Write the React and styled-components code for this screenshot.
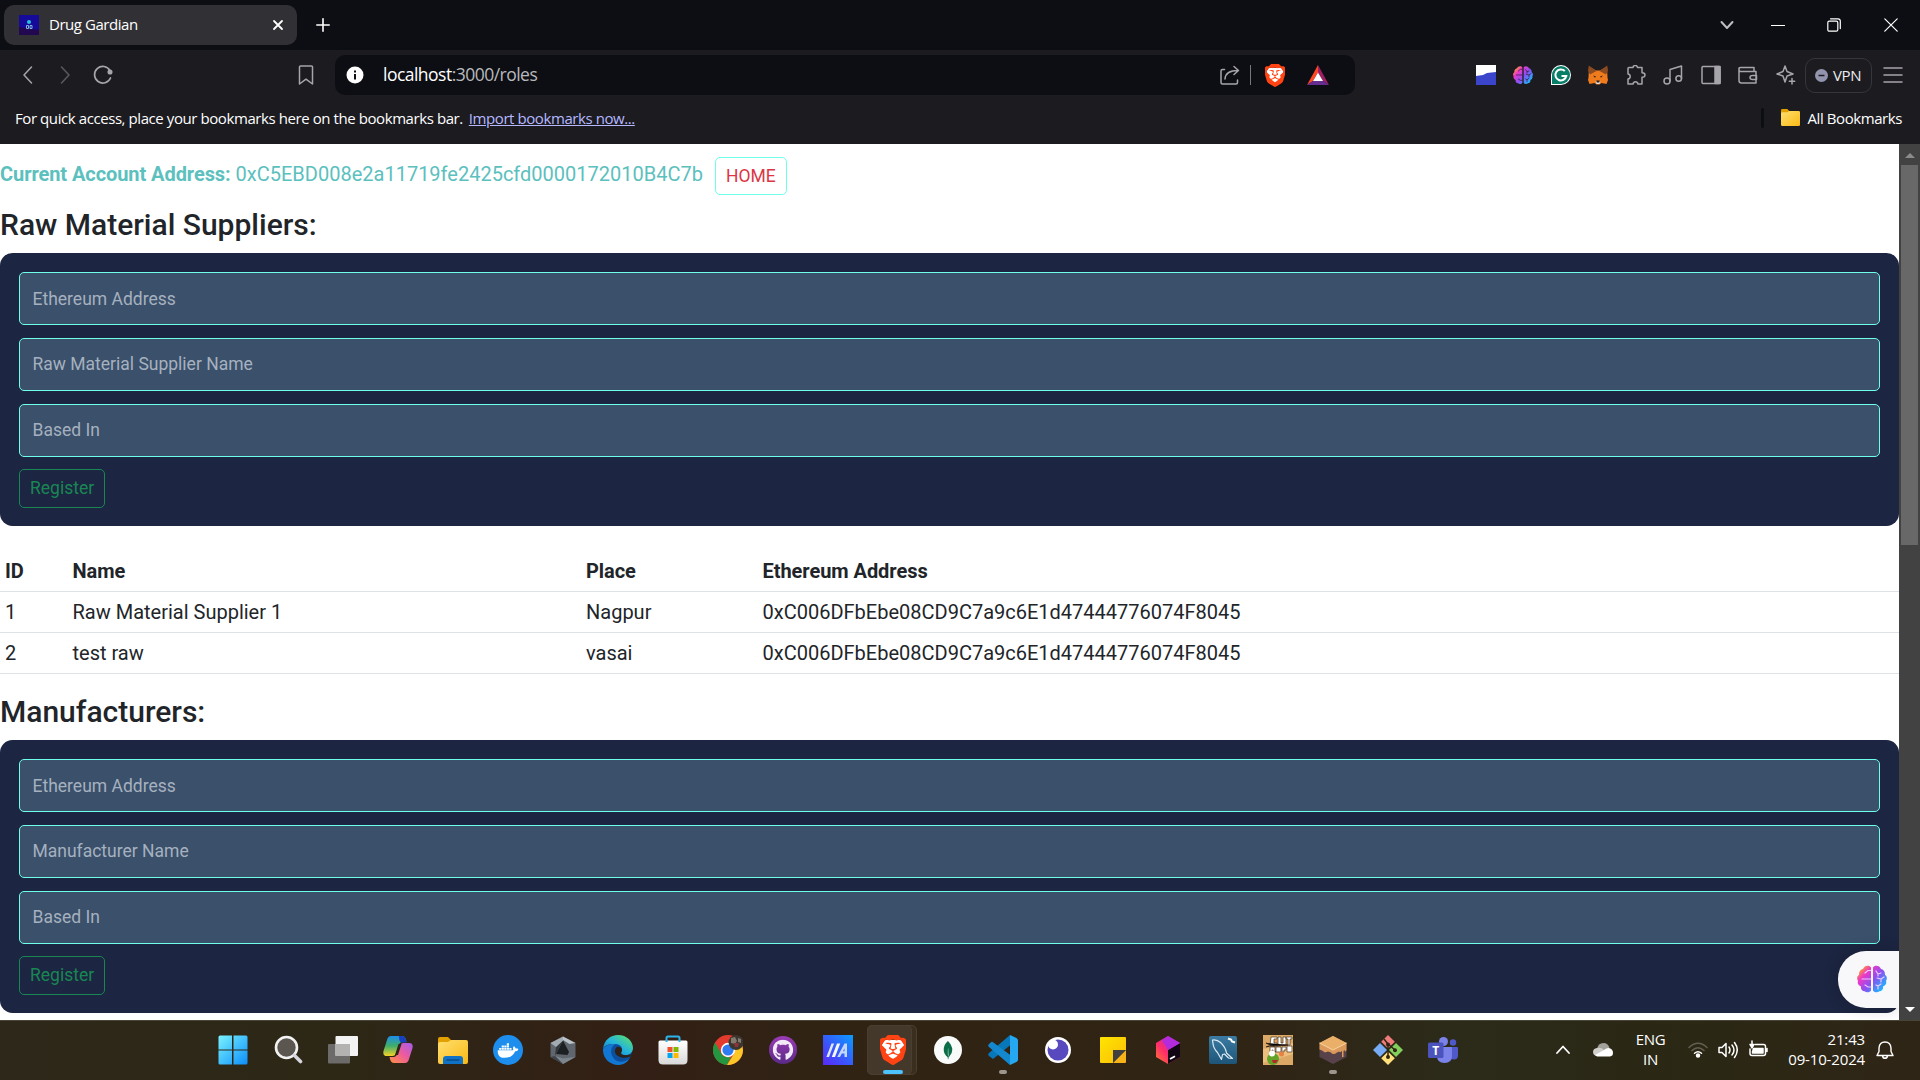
import React from "react";
import styled, { createGlobalStyle, css } from "styled-components";
import { FaDocker, FaGithub } from "react-icons/fa";
import { SiBrave, SiMongodb } from "react-icons/si";

const Global = createGlobalStyle`
  *, *::before, *::after { box-sizing: border-box; }
  html, body { margin: 0; padding: 0; }
  body { width: 1920px; height: 1080px; overflow: hidden; }
  svg { display: block; flex: none; }
`;

const ui = css`font-family: "Open Sans", "Noto Sans", sans-serif;`;

const Screen = styled.div`
  width: 1920px;
  height: 1080px;
  display: flex;
  flex-direction: column;
  overflow: hidden;
  background: #1c1b20;
`;

/* ---------- Tab strip ---------- */
const TabStrip = styled.header`
  ${ui}
  height: 50px;
  flex: none;
  display: flex;
  align-items: center;
  padding-left: 4px;
  background: #0d0e13;
  color: #fff;
`;
const Tab = styled.div`
  width: 293px;
  height: 40px;
  border-radius: 10px;
  background: #313035;
  display: flex;
  align-items: center;
  padding: 0 11.5px 0 15px;
`;
const TabTitle = styled.span`
  flex: 1;
  margin-left: 10px;
  padding-bottom: 2px;
  font-size: 15px;
  letter-spacing: -0.45px;
`;
const NewTab = styled.div`margin-left: 19px;`;
const WindowButtons = styled.div`
  margin-left: auto;
  display: flex;
  align-items: center;
  padding: 0 1px 1px 0;
`;
const WinCell = styled.div`
  width: ${(p) => p.$w}px;
  display: flex;
  justify-content: center;
`;

/* ---------- Toolbar ---------- */
const Toolbar = styled.div`
  ${ui}
  height: 50px;
  flex: none;
  display: flex;
  align-items: center;
  color: #a6a5aa;
`;
const NavButtons = styled.div`
  width: 335px;
  display: flex;
  align-items: center;
  padding-left: 9px;
`;
const NavCell = styled.div`
  width: 37.5px;
  display: flex;
  justify-content: center;
  opacity: ${(p) => (p.$dim ? 0.45 : 1)};
  margin-left: ${(p) => p.$push || 0}px;
`;
const AddressBar = styled.div`
  width: 1020px;
  height: 40px;
  border-radius: 10px;
  background: #0d0e13;
  display: flex;
  align-items: center;
  padding: 0 26px 0 11px;
`;
const Url = styled.div`
  flex: 1;
  margin-left: 19px;
  padding-bottom: 2px;
  font-size: 17.5px;
  letter-spacing: -0.52px;
  color: #b9b9bd;
  b { font-weight: 400; color: #fff; }
`;
const AddressActions = styled.div`
  display: flex;
  align-items: center;
  i { width: 1px; height: 20px; margin: 0 14px 0 10px; background: #77777c; }
`;
const RewardsIcon = styled.div`margin-left: 22px;`;
const Extensions = styled.div`
  display: flex;
  align-items: center;
  margin-left: 112px;
`;
const ExtCell = styled.div`
  width: 37.5px;
  display: flex;
  justify-content: center;
`;
const Vpn = styled.div`
  width: 67px;
  height: 35px;
  border: 1px solid #36353b;
  border-radius: 10px;
  display: flex;
  align-items: center;
  justify-content: center;
  gap: 5px;
  font-size: 15px;
  letter-spacing: -0.4px;
  color: #ececf2;
`;
const VpnLabel = styled.span`padding-bottom: 1px;`;
const MenuCell = styled.div`margin-left: 11px;`;

const BookmarksBar = styled.div`
  ${ui}
  height: 44px;
  flex: none;
  display: flex;
  align-items: center;
  padding: 0 18px 8px 15px;
  font-size: 15px;
  letter-spacing: -0.42px;
  color: #fff;
  white-space: pre;
`;
const ImportLink = styled.a`
  margin-left: 6px;
  color: #b5b8ff;
  text-decoration: underline;
`;
const AllBookmarks = styled.div`
  margin-left: auto;
  display: flex;
  align-items: center;
  i { width: 3px; height: 20px; border-radius: 2px; background: #0d0e13; margin-right: 17px; }
  span { margin-left: 8px; }
`;

/* ---------- Page ---------- */
const Viewport = styled.div`
  height: 876px;
  flex: none;
  display: flex;
  overflow: hidden;
`;
const Page = styled.main`
  width: 1899px;
  background: #fff;
  color: #212529;
  font-family: Roboto, sans-serif;
  font-size: 20px;
  line-height: 30px;
  overflow: hidden;
`;
const AccountRow = styled.div`
  height: 65px;
  display: flex;
  align-items: flex-start;
  padding-top: 13px;
  color: #5bc0be;
  white-space: pre;
`;
const AccountText = styled.div`
  padding-top: 2px;
  b { font-weight: 700; letter-spacing: -0.07px; }
`;
const HomeButton = styled.button`
  height: 38px;
  margin-left: 12px;
  padding: 0 10px;
  border: 1px solid #6fffe9;
  border-radius: 5px;
  background: transparent;
  color: #dc3545;
  font: 400 17.5px/26px Roboto, sans-serif;
`;
const Heading = styled.h4`
  margin: 0;
  height: ${(p) => p.$h}px;
  padding-top: ${(p) => p.$top}px;
  font-size: 30px;
  line-height: ${(p) => p.$lh}px;
  font-weight: 500;
`;
const Card = styled.form`
  height: 273px;
  padding: 19px;
  border-radius: 12.5px;
  background: #1c2541;
  display: flex;
  flex-direction: column;
  align-items: flex-start;
`;
const Field = styled.input`
  width: 100%;
  height: 53px;
  flex: none;
  margin-bottom: 13px;
  padding: 0 12.5px;
  border: 1px solid #6fffe9;
  border-radius: 5px;
  background: #3a506b;
  font: 400 17.5px Roboto, sans-serif;
  & + & { padding-bottom: 2px; }
  &::placeholder { color: #a6b1bf; opacity: 1; }
`;
const RegisterButton = styled.button`
  height: 39px;
  flex: none;
  margin-top: -1px;
  padding: 0 10px 2px;
  border: 1px solid #198754;
  border-radius: 5px;
  background: transparent;
  color: #198754;
  font: 400 17.5px/26px Roboto, sans-serif;
`;
const Table = styled.div`
  margin-top: 25px;
  display: grid;
  grid-template-columns: 67.5px 513.5px 176.5px 1fr;
`;
const Cell = styled.div`
  height: 41px;
  padding: 5px;
  border-bottom: 1px solid #dee2e6;
  font-weight: ${(p) => (p.$head ? 700 : 400)};
  letter-spacing: ${(p) => (p.$head ? "-0.05px" : "0")};
`;
const Scrollbar = styled.div`
  width: 21px;
  background: #424242;
  display: flex;
  flex-direction: column;
  align-items: center;
  padding: 9px 0 8px;
`;
const Thumb = styled.div`
  width: 17px;
  height: 380px;
  margin: 7px 0 auto;
  background: #686868;
`;
const BrainBubble = styled.div`
  position: absolute;
  left: 1838px;
  top: 951px;
  width: 61px;
  height: 57px;
  padding: 0 0 1px 6px;
  border-radius: 28px 0 0 28px;
  background: #f8f8fa;
  box-shadow: 0 0 16px rgba(0, 0, 0, 0.18);
  clip-path: inset(-20px 0 -12px -20px);
  display: flex;
  align-items: center;
  justify-content: center;
`;

/* ---------- Taskbar ---------- */
const Taskbar = styled.footer`
  ${ui}
  height: 60px;
  flex: none;
  display: flex;
  align-items: center;
  padding: 0 0 1px 205px;
  border-top: 1px solid #4a4637;
  background: linear-gradient(90deg, #2d2819 0, #2d2716 350px, #331f15 640px, #302314 800px, #302415 1250px, #2c2a19 1440px, #2a2815 1640px, #2f2516 1920px);
  color: #fff;
`;
const AppCell = styled.div`
  width: 55.04px;
  height: 50px;
  flex: none;
  display: flex;
  align-items: center;
  justify-content: center;
  position: relative;
`;
const ActiveTile = styled.div`
  position: absolute;
  left: 2px;
  top: 0;
  width: ${(p) => p.$w}px;
  height: 50px;
  border: 1px solid #4a3e30;
  border-radius: 5px;
  background: rgba(255, 255, 255, 0.05);
`;
const Indicator = styled.div`
  position: absolute;
  bottom: 1px;
  width: ${(p) => (p.$active ? 20 : 8)}px;
  height: 4px;
  border-radius: 2px;
  background: ${(p) => (p.$active ? "#4cc2ff" : "#9d968c")};
`;
const IconLayer = styled.div`position: relative;`;
const Tray = styled.div`
  margin-left: auto;
  display: flex;
  align-items: center;
  padding: 0 26px 1px 0;
  font-size: 15px;
  line-height: 20px;
`;
const Lang = styled.div`
  width: 40px;
  margin: 0 14.5px 0 18px;
  padding-bottom: 1px;
  text-align: center;
  letter-spacing: -0.3px;
`;
const Clock = styled.div`
  width: 84px;
  margin: 0 11px 0 13px;
  padding-bottom: 1px;
  text-align: right;
  white-space: nowrap;
  letter-spacing: -0.15px;
`;
const TrayIcon = styled.div`margin-left: ${(p) => p.$gap}px;`;

/* ---------- Icons ---------- */
const Line = ({ size = 20, w = 1.5, children, vb = 20 }) => (
  <svg width={size} height={size} viewBox={`0 0 ${vb} ${vb}`} fill="none" stroke="currentColor" strokeWidth={w} strokeLinecap="round" strokeLinejoin="round">{children}</svg>
);
const HiddenSvg = styled.svg`position: absolute;`;
const Defs = () => (
  <HiddenSvg width="0" height="0">
    <defs>
      <linearGradient id="brain" x1="0" y1="0" x2="30" y2="28" gradientUnits="userSpaceOnUse"><stop offset=".12" stopColor="#ff9a2e" /><stop offset=".3" stopColor="#ec38c8" /><stop offset=".55" stopColor="#8b50f0" /><stop offset=".85" stopColor="#1eb4ff" /></linearGradient>
      <linearGradient id="win" x1="0" y1="0" x2="30" y2="30" gradientUnits="userSpaceOnUse"><stop offset="0" stopColor="#7cf4ff" /><stop offset="1" stopColor="#0a8dfa" /></linearGradient>
      <linearGradient id="folder" x1="0" y1="0" x2="1" y2="1"><stop offset="0" stopColor="#ffdf70" /><stop offset="1" stopColor="#f9b914" /></linearGradient>
      <linearGradient id="edge" x1="0" y1="1" x2="1" y2="0"><stop offset="0" stopColor="#0b78d0" /><stop offset=".5" stopColor="#25b5dc" /><stop offset="1" stopColor="#62e65c" /></linearGradient>
      <linearGradient id="copA" x1="0" y1="0" x2="0" y2="1"><stop offset="0" stopColor="#1d8fe8" /><stop offset=".5" stopColor="#3fae6a" /><stop offset="1" stopColor="#f6d326" /></linearGradient>
      <linearGradient id="copB" x1="1" y1="0" x2="0" y2="1"><stop offset="0" stopColor="#a55bf0" /><stop offset=".5" stopColor="#ee5c9a" /><stop offset="1" stopColor="#ff9340" /></linearGradient>
      <linearGradient id="msi" x1="1" y1="0" x2="0" y2="1"><stop offset="0" stopColor="#0a9cff" /><stop offset=".6" stopColor="#3d52fb" /><stop offset="1" stopColor="#5a28f8" /></linearGradient>
      <linearGradient id="jb" x1="0" y1="1" x2="1" y2="0"><stop offset="0" stopColor="#ff7a30" /><stop offset=".4" stopColor="#fd2d6a" /><stop offset="1" stopColor="#a428f0" /></linearGradient>
      <linearGradient id="sql" x1="0" y1="0" x2="0" y2="1"><stop offset="0" stopColor="#3c7ba3" /><stop offset="1" stopColor="#1d5578" /></linearGradient>
      <linearGradient id="gh" x1="0" y1="0" x2="0" y2="1"><stop offset="0" stopColor="#9a3bb5" /><stop offset="1" stopColor="#5a2a88" /></linearGradient>
      <linearGradient id="bag" x1="0" y1="0" x2="0" y2="1"><stop offset="0" stopColor="#ffffff" /><stop offset="1" stopColor="#d8d8d8" /></linearGradient>
      <linearGradient id="note" x1="0" y1="0" x2="1" y2="1"><stop offset="0" stopColor="#ffe500" /><stop offset="1" stopColor="#fbbd08" /></linearGradient>
    </defs>
  </HiddenSvg>
);
const BraveIcon = ({ w, h }) => (
  <svg width={w} height={h} viewBox="2.7 0 18.600 24" preserveAspectRatio="none">
    <path fill="#fff" d="M6 4h12l2 4-3 10-5 4-5-4L4 8z" />
    <SiBrave x="0" y="0" width="24" height="24" size={24} color="#ff4313" />
  </svg>
);
const Brain = ({ size }) => (
  <svg width={size} height={size} viewBox="0 0 30 28">
    <path fill="url(#brain)" d="M14 2.500v23c-1 2-4.500 2.500-6.500.8C5 26 3.500 24 4 21.500 1.500 20.500 0 18.500 1 16c-1.500-2-1-5 1-6C1.800 6.500 3.500 4.500 6 4 7 .5 12.500-.5 14 2.500zM16 2.500v23c1 2 4.500 2.500 6.500.8 2.500-.3 4-2.300 3.500-4.800 2.500-1 4-3 3-5.500 1.500-2 1-5-1-6 .2-3.500-1.500-5.500-4-6C23 .5 17.500-.5 16 2.500z" />
    <path fill="none" stroke={size > 25 ? "#e9c8ff" : "#3c2050"} strokeWidth="1.200" strokeLinecap="round" d="M14 5.500h-3l-3 2.500M14 14H5M14 22h-3l-3-2M19 6l2 3 3-1M21 9v2M20 13l4 1 3-2M24 14v3M19 20l2 1 3-2M21 21v3" />
  </svg>
);
const Folder = ({ size, blue }) => (
  <svg width={size} height={size * 0.9} viewBox="0 0 30 27">
    <path fill="#e2a100" d="M0 2q0-2 2-2h8l3 3h15v8H0z" />
    <path fill="url(#folder)" d="M0 7q0-2 2-2h8l3-2h15q2 0 2 2v20q0 2-2 2H2q-2 0-2-2z" />
    {blue && <path fill="#0f72c4" d="M5 27v-5q0-3 3-3h14q3 0 3 3v5z" />}
    {blue && <path stroke="#0a4c8c" strokeWidth="1.500" d="M8.500 23h13" />}
  </svg>
);
const S = ({ children, w = 30, h = 30, vb = "0 0 30 30" }) => <svg width={w} height={h} viewBox={vb}>{children}</svg>;

const apps = [
  { n: "start", i: <S><path fill="url(#win)" d="M.5 2q0-1.500 1.500-1.500h12v14H.5zM15.500.5h12.500q1.500 0 1.500 1.500v12.500h-14zM.5 15.500h13.500v14H2q-1.500 0-1.500-1.500zM15.500 15.500h14V28q0 1.500-1.500 1.500H15.500z" /></S> },
  { n: "search", i: <S><circle cx="13.500" cy="12.500" r="10.500" fill="#5b5750" stroke="#f2f2f2" strokeWidth="2.600" /><path d="M21.500 20.500l6 6" stroke="#d6d6dc" strokeWidth="3.600" strokeLinecap="round" /></S> },
  { n: "tasks", i: <S><rect y="9" width="22" height="19.500" rx="1" fill="#6d6b69" /><rect x="7.500" y="1" width="22.500" height="20" rx="1" fill="#f3f3f3" /><path fill="#b3b2b0" d="M7.500 9H22v12H7.500z" /></S> },
  { n: "copilot", i: <S><path fill="url(#copA)" d="M8 1h11q3 0 4 4l.5 2h-4q-3 0-4 4l-2.200 7q-1 3-4 3H4q-4.500 0-3.500-5L4 5Q5 1 8 1z" /><path fill="#183fc0" d="M16 1h3q3 0 4 4l.7 2.500h-5q-2.700-.5-2.700-6.500z" /><path fill="url(#copB)" d="M22 28H11q-3 0-4-4l-.5-2h4q3 0 4-4l2.200-7q1-3 4-3H26q4.500 0 3.500 5L26 24q-1 4-4 4z" /><path fill="#2d2716" d="M15.500 9h3l-3.500 11h-3z" /></S> },
  { n: "files", i: <Folder size={30} blue /> },
  { n: "docker", i: <S><circle cx="15" cy="15" r="15" fill="#1d8eed" /><g transform="translate(4.500 5)"><FaDocker size={21} color="#fff" /></g></S> },
  { n: "crystal", i: <S><path fill="#5f666e" d="M15 1.500l12.500 6.500v14L15 29 2.500 22V8z" /><path fill="#bac2ca" d="M15 1.500l12.500 6.500-6 1L15 5z" /><path fill="#7c848c" d="M7 21l8 2.500L27.500 22 15 29z" /><path fill="#3d4349" d="M2.500 22L7 21l8 8z" /><path fill="#1d2023" d="M15 5.500L21 17l-1.500 3L8 19z" /><path fill="#33383d" d="M15 5.500L7 21l1-9z" /><path fill="#a2aab2" d="M2.500 8L15 1.500v4L8 12z" /></S> },
  { n: "edge", i: <S><circle cx="17" cy="17" r="11.500" fill="#0c4f9e" /><path fill="url(#edge)" d="M0 14C1 5 7.500 0 15 0c9 0 15 6.500 15 13 0 4.500-3.500 7-7.500 7-3.500 0-5-1.500-4-3 2-4-1-8-6-8C6 9 1.500 10 0 14z" /><path fill="#1277d2" d="M0 14c2-4 7-5.500 12.500-5C8.500 11 7 16 9 20.500c2 4.500 6 7 11 6 3-.6 4.500-1.500 6.500-3C24 28 19.500 30 15 30 6.500 30-.5 23 0 14z" /><path fill="#2e2116" d="M14 11.800q4.500-.3 5 3-.1 2-1 3-.3 2.500 5 2.500 3 0 5-1.200l-.8 2.400q-5 2-9 1Q12 20.500 11.800 16q0-2.500 2.200-4.200z" /></S> },
  { n: "store", i: <S><path fill="url(#bag)" d="M.5 7q0-1.500 1.500-1.500h26q1.500 0 1.500 1.500v18q0 4.500-4.500 4.500H5Q.5 29.500.5 25z" /><path fill="none" stroke="#2bb5ec" strokeWidth="2" d="M8.500 7V3q0-1.500 1.500-1.500h10q1.500 0 1.500 1.500v4" /><path fill="#f1502f" d="M9.500 12H14.500v5h-5z" /><path fill="#7fba00" d="M15.500 12h5v5h-5z" /><path fill="#00a4ef" d="M9.500 18h5v5h-5z" /><path fill="#ffb900" d="M15.500 18h5v5h-5z" /></S> },
  { n: "chrome", i: <S><circle cx="15" cy="15" r="15" fill="#e33b2e" /><path fill="#24963f" d="M2 7.500L8.500 19q3 4 9.500 3l-4 8C6 29.500 0 23 0 15q0-4 2-7.500z" /><path fill="#fcc626" d="M15 8h13q2 3 2 7c0 8-7 15.500-16 15l7.500-12z" /><circle cx="15" cy="15" r="7.200" fill="#fff" /><circle cx="15" cy="15" r="5.600" fill="#2f7cf0" /><circle cx="23" cy="7.500" r="7.500" fill="#3b3630" /><path fill="#83796c" d="M18 3l4-1 2 4-2 3-4-1zM25 3l3 1v4l-3-1z" /><path fill="#8d3436" d="M21 8h5l-1 4h-3z" /></S> },
  { n: "github", i: <S><circle cx="15" cy="15" r="14" fill="url(#gh)" /><g transform="translate(4.500 4.500)"><FaGithub size={21} color="#f2eaf7" /></g></S> },
  { n: "myasus", i: <S><path fill="url(#msi)" d="M0 0h30v30H0z" /><path fill="#dce9ff" d="M8.500 8.500h2.600L6 22H3.400z" /><path fill="#f4f8ff" d="M14 8.500h3.200L12 22H8.800z" /><path fill="#c4d8ff" d="M21.500 8.500H24V22h-2.500v-3.500h-4l1-2.300h3v-3L17 22h-2.800z" /></S> },
  { n: "brave", active: true, i: <BraveIcon w={26} h={30} /> },
  { n: "compass", i: <S><circle cx="15" cy="15" r="14" fill="#f9fbfa" /><g transform="translate(5.500 5.500)"><SiMongodb size={19} color="#0a6e49" /></g></S> },
  { n: "code", running: true, i: <S><path fill="#0877b9" d="M22 0l3 8L5 24l-4-3q-1.500-1.500 0-3z" /><path fill="#1488cf" d="M1 12q-1.500-1.500 0-3l3-2.500L25 22l-3 8z" /><path fill="#26a7f2" d="M22 0l6.500 3Q30 4 30 5.500v19q0 1.500-1.500 2.500L22 30z" /></S> },
  { n: "insomnia", i: <S><circle cx="15" cy="15" r="13" fill="#fff" /><circle cx="15" cy="15" r="10.500" fill="#5849be" /><circle cx="10" cy="9.500" r="5" fill="#fff" /></S> },
  { n: "notes", i: <S><path fill="url(#note)" d="M2 3q0-1 1-1h24q1 0 1 1v12L15 28H3q-1 0-1-1z" /><path fill="#f7b318" d="M28 15v12q0 1-1 1H15z" /><path fill="#423f3f" d="M15 15h13L15 28z" /></S> },
  { n: "toolbox", i: <S><path fill="url(#jb)" d="M15 1l12 7v14l-12 7-12-7V8z" /><path fill="#120614" d="M15 15l12-7v14l-12 7z" /><path fill="#b22bdd" d="M15 1l12 7-12 7L9 5z" /><path stroke="#fff" strokeWidth="1.800" d="M17 24l5-2.800" /></S> },
  { n: "mysql", i: <S><rect x="1" y="1" width="28" height="28" rx="2" fill="url(#sql)" /><path fill="none" stroke="#dcebf3" strokeWidth="1.200" strokeLinejoin="round" d="M4.500 5q4-1 8 2.500 5 4.500 6 10.500l6 5.500-4-.5-4-4-2 .5-1 5-4-7q-4-4-4.500-9z" /><path d="M20 3.500l3 1 1 2 3 1" fill="none" stroke="#fff" strokeWidth="2" /></S> },
  { n: "rope", i: <S><path fill="#dca866" d="M0 0h30v30H0z" /><path fill="#edbf7d" d="M0 14l30-6v11L0 28z" /><path fill="#fff" stroke="#493321" strokeWidth=".7" d="M8 2h6v2h-3v4h3v2H7zM15 2h3v6h2V2h3v8h-8zM23 2h6v2h-2v6h-2V4h-2zM7 12h5v4l1 1h-3v-2h-1v2H7zM13 12h5v5h-5zM19 12h4v3h-2v2h-2zM24 11h5v6h-5z" /><path stroke="#31231b" strokeWidth="1.300" d="M3 8l7 3 15-1M3 12l7-2" /><circle cx="10" cy="24" r="6" fill="#62a328" /><circle cx="9" cy="18.500" r="3" fill="#fff" /><path fill="#b7272b" d="M9 25h6l-2 3h-3z" /><circle cx="18.500" cy="19" r="2.500" fill="#e78244" /></S> },
  { n: "dungeon", running: true, i: <S><path fill="#57424a" d="M1.500 8L15 15l13.500-7v14L15 29 1.500 22z" /><path fill="#db9a5b" d="M15 1l13.500 7v7q-1 3-2 0l-1 1v6h-1.500v-6q-2 2-3 .5l-2 1q-4 3-6 0l-3-1-3 1-3-2-2.500-1V8z" /><path fill="#eab06a" d="M15 1l13.500 7L15 15 1.500 8z" /><path fill="none" stroke="#f8d29d" d="M1.500 8L15 15l13.500-7" /></S> },
  { n: "git", i: <S><path fill="#ef7b7b" d="M15 0l6.800 6.800L15 13.600 8.200 6.800z" /><path fill="#82cf5b" d="M23 8l7 7-7 7-7-7z" /><path fill="#78abf6" d="M7 8l7 7-7 7-7-7z" /><path fill="#ffe07a" d="M15 16.400l6.800 6.800L15 30l-6.800-6.800z" /><path fill="none" stroke="#302415" strokeWidth="1.500" d="M11 4l4 5v12M15 9l7 6" /><g fill="#302415"><circle cx="15" cy="9.500" r="2" /><circle cx="15" cy="22" r="2" /><circle cx="22" cy="15.200" r="2" /></g></S> },
  { n: "teams", i: <S><circle cx="25" cy="7.500" r="3.200" fill="#5059c9" /><path fill="#5059c9" d="M19 12h10q1 0 1 1v7q0 4.500-4 4.500t-7-3z" /><circle cx="15.500" cy="6.500" r="4.500" fill="#7b83eb" /><path fill="#7b83eb" d="M9 12h15v9q0 7-7.500 7T9 21z" /><rect y="7.500" width="15.500" height="15.500" rx="1.500" fill="#4b53bc" /><text x="7.700" y="19.600" textAnchor="middle" fontFamily="Open Sans, sans-serif" fontSize="12" fontWeight="700" fill="#fff">T</text></S> },
];

const GrammarlyIcon = () => (
  <S w={20} h={20} vb="0 0 20 20"><path fill="#fff" d="M10 0a10 10 0 1 1 0 20H0V10A10 10 0 0 1 10 0z" /><path fill="#087d68" d="M10 1a9 9 0 1 1 0 18H1v-9a9 9 0 0 1 9-9z" /><path fill="none" stroke="#fff" strokeWidth="2" d="M13.800 6A5.500 5.500 0 1 0 15.300 11H10.500" /></S>
);
const FoxIcon = () => (
  <S w={20} h={20} vb="0 0 20 20"><path fill="#ef7b1d" d="M1 1.500l7 4h4l7-4 .5 11L20 15l-1.500 4-5-1-2 1.500h-3l-2-1.500-5 1L0 15l.5-2.500z" /><path fill="#8c4a20" d="M.8.5L8.500 6 2 9.500 0 5.500zM19.200.5L11.500 6 18 9.500l2-4z" /><path fill="#dedede" d="M7.500 16.500h5L11.500 19h-3z" /><path fill="#2b2320" d="M8.300 15.500h3.400l-.5 2H8.800zM5 10.500l3 1-1 1.200zM15 10.500l-3 1 1 1.200z" /></S>
);

/* ---------- Content ---------- */
const Section = ({ fieldName }) => (
  <Card>
    <Field placeholder="Ethereum Address" />
    <Field placeholder={fieldName} />
    <Field placeholder="Based In" />
    <RegisterButton type="button">Register</RegisterButton>
  </Card>
);
const rows = [
  ["1", "Raw Material Supplier 1", "Nagpur", "0xC006DFbEbe08CD9C7a9c6E1d47444776074F8045"],
  ["2", "test raw", "vasai", "0xC006DFbEbe08CD9C7a9c6E1d47444776074F8045"],
];

export default function App() {
  return (
    <Screen>
      <Global />
      <Defs />
      <TabStrip>
        <Tab>
          <S w={20} h={20} vb="0 0 20 20"><path fill="#160a9a" d="M0 0h20v20H0z" /><path fill="#26083f" d="M0 12l20 3v5H0z" opacity=".8" /><circle cx="10" cy="7" r="2" fill="#25c3d8" /><path fill="none" stroke="#7fb6d9" d="M7.500 10.500h2v3h-2zM11 10.500h2v3h-2z" /></S>
          <TabTitle>Drug Gardian</TabTitle>
          <Line size={16} w={1.8} vb={16}><path d="M4 4l8 8M12 4l-8 8" /></Line>
        </Tab>
        <NewTab><Line size={14} w={1.6} vb={14}><path d="M7 .8v12.400M.8 7h12.400" /></Line></NewTab>
        <WindowButtons>
          <WinCell $w={45}><Line size={14} w={2} vb={14}><path d="M1.500 4L7 10l5.500-6" stroke="#bdbdc2" /></Line></WinCell>
          <WinCell $w={57}><Line size={14} w={1.2} vb={14}><path d="M.5 7.500h13" /></Line></WinCell>
          <WinCell $w={56}><Line size={14} w={1.2} vb={14}><rect x=".8" y="3.200" width="10" height="10" rx="1.500" /><path d="M3.500.8h7.500q2.300 0 2.300 2.300v7.500" /></Line></WinCell>
          <WinCell $w={57}><Line size={14} w={1.2} vb={14}><path d="M.8.8l12.400 12.400M13.200.8L.8 13.200" /></Line></WinCell>
        </WindowButtons>
      </TabStrip>

      <Toolbar>
        <NavButtons>
          <NavCell><Line><path d="M13.500 2L6 10l7.500 8" /></Line></NavCell>
          <NavCell $dim><Line><path d="M6.500 2l7.500 8-7.500 8" /></Line></NavCell>
          <NavCell><Line w={1.7}><path d="M17.500 13A8.300 8.300 0 1 1 17 5.500" /><circle cx="17" cy="7" r="1.700" fill="currentColor" /></Line></NavCell>
          <NavCell $push={166}><Line w={1.5}><path d="M3.500 1.800Q3.500 1 4.500 1h11q1 0 1 .8V19L10 14.200 3.500 19z" /></Line></NavCell>
        </NavButtons>
        <AddressBar>
          <S w={18} h={18} vb="0 0 18 18"><circle cx="9" cy="9" r="8.500" fill="#fff" /><path stroke="#0d0e13" strokeWidth="2" d="M9 8v5.500M9 4.500v2" /></S>
          <Url><b>localhost</b>:3000/roles</Url>
          <AddressActions>
            <Line w={1.500}><path d="M4.500 4.500H2.500q-1.500 0-1.500 1.500v11.500q0 1.500 1.500 1.500H16q1.500 0 1.500-1.500V15M5 14q.5-8.500 13-8.500M14 1.500l4.500 4-4.500 4" /></Line>
            <i />
            <BraveIcon w={20} h={23} />
            <RewardsIcon><S w={22} h={20} vb="0 0 22 20"><path fill="#ff4724" d="M11 0v7.500L6 16 0 20z" /><path fill="#9e1f63" d="M11 0l11 20-6-4-5-8.500z" /><path fill="#662d91" d="M0 20l6-4h10l6 4z" /><path fill="#fff" d="M11 7.500L16 16H6z" /></S></RewardsIcon>
          </AddressActions>
        </AddressBar>
        <Extensions>
          <ExtCell><S w={20} h={20} vb="0 0 20 20"><path fill="#fff" d="M0 0h20v20H0z" /><path fill="#3a45cc" d="M0 11l7-1 4-2 9-1v13H0z" /></S></ExtCell>
          <ExtCell><Brain size={20} /></ExtCell>
          <ExtCell><GrammarlyIcon /></ExtCell>
          <ExtCell><FoxIcon /></ExtCell>
          <ExtCell><Line><path d="M3 2.500h4q0-2 2.200-2t2.300 2H16v5.200q3 0 3 2.300t-3 2.300V19h-4q-.5-2.200-2.500-2.200T7 19H2v-5q2.200-.3 2.200-2.500T2 9V3.500q0-1 1-1z" /></Line></ExtCell>
          <ExtCell><Line><path d="M7 16V4.500L18.500 1v12.500" /><circle cx="4" cy="16" r="3" /><circle cx="15.700" cy="13.500" r="2.800" /></Line></ExtCell>
          <ExtCell><Line><rect x="1" y="1.500" width="18" height="17" rx="1" /><path d="M14 1.500h5v17h-5z" fill="currentColor" /></Line></ExtCell>
          <ExtCell><Line><path d="M1 3v12.500Q1 18 3.500 18H18V6.500H2.500Q1 6.500 1 4.500t1.500-2H16v4M18.500 10.500h-4q-2.500 0-2.500 2t2.500 2h4z" /></Line></ExtCell>
          <ExtCell><Line><path d="M9 1l2 5.500L17 9l-6 2-2 6-2-6L1 9l6-2.500zM16 13.500v5.500M13.300 16.200h5.400" /></Line></ExtCell>
          <Vpn><S w={13} h={13} vb="0 0 13 13"><circle cx="6.500" cy="6.500" r="6.500" fill="#9395ae" /><path stroke="#1c1b20" strokeWidth="1.500" d="M3.500 6.500h6" /></S><VpnLabel>VPN</VpnLabel></Vpn>
          <MenuCell><Line w={1.5}><path d="M1 3h18M1 10h18M1 17h18" /></Line></MenuCell>
        </Extensions>
      </Toolbar>

      <BookmarksBar>
        <span>For quick access, place your bookmarks here on the bookmarks bar.</span>
        <ImportLink>Import bookmarks now...</ImportLink>
        <AllBookmarks><i /><Folder size={19} /><span>All Bookmarks</span></AllBookmarks>
      </BookmarksBar>

      <Viewport>
        <Page>
          <AccountRow>
            <AccountText><b>Current Account Address:</b> 0xC5EBD008e2a11719fe2425cfd0000172010B4C7b</AccountText>
            <HomeButton>HOME</HomeButton>
          </AccountRow>
          <Heading $h={44} $top={0} $lh={31}>Raw Material Suppliers:</Heading>
          <Section fieldName="Raw Material Supplier Name" />
          <Table>
            {["ID", "Name", "Place", "Ethereum Address"].map((h) => <Cell key={h} $head>{h}</Cell>)}
            {rows.flat().map((c, k) => <Cell key={k}>{c}</Cell>)}
          </Table>
          <Heading $h={66} $top={20} $lh={36}>Manufacturers:</Heading>
          <Section fieldName="Manufacturer Name" />
        </Page>
        <Scrollbar>
          <S w={10} h={5} vb="0 0 10 5"><path fill="#8b8b8b" d="M0 5l5-5 5 5z" /></S>
          <Thumb />
          <S w={10} h={5} vb="0 0 10 5"><path fill="#fff" d="M0 0h10L5 5z" /></S>
        </Scrollbar>
      </Viewport>
      <BrainBubble><Brain size={30} /></BrainBubble>

      <Taskbar>
        {apps.map((a) => (
          <AppCell key={a.n}>
            {a.active && <ActiveTile $w={50} />}
            {a.active && <ActiveTile $w={45} />}
            <IconLayer>{a.i}</IconLayer>
            {(a.active || a.running) && <Indicator $active={a.active} />}
          </AppCell>
        ))}
        <Tray>
          <Line size={16} w={1.8} vb={16}><path d="M2 11l6-6.500L14 11" /></Line>
          <TrayIcon $gap={22}><S w={20} h={14} vb="0 0 20 14"><path fill="#a3a19c" d="M4 6Q5 0 10.500 0 15 0 16.500 5L10 9z" /><path fill="#d0cfcc" d="M4 5q4-1 7 2l-7 6q-4-.5-4-4t4-4z" /><path fill="#fff" d="M2 12l9-5q2-2 5-2 4 1 4 5 0 3-3 3.500H4z" /></S></TrayIcon>
          <Lang>ENG<br />IN</Lang>
          <TrayIcon $gap={3}><Line><g stroke="#8a857b"><path d="M1 7.500Q10-1 19 7.500M4 10.500q6-5.500 12 0" opacity=".6" /></g><path d="M6.500 13.200q3.500-3 7 0" /><circle cx="10" cy="15.500" r="1.500" fill="currentColor" /></Line></TrayIcon>
          <TrayIcon $gap={10}><Line w={1.500}><path d="M1 7.500h3L8 3.500v13l-4-4H1zM11 7q2 3 0 6M14 5q4 5 0 10M16.500 2.500q5.500 7.500 0 15" /></Line></TrayIcon>
          <TrayIcon $gap={10}><Line w={1.500}><path d="M7 4.500h8.500q2 0 2 2v7q0 2-2 2H4q-2 0-2-2V9M19 8.500v3" /><path d="M5.500 8.500h9.500v4.500H4.500V12z" fill="currentColor" /><path d="M4 1v4M2 4.500h4L4 8z" fill="currentColor" /></Line></TrayIcon>
          <Clock>21:43<br />09-10-2024</Clock>
          <Line size={18} w={1.400} vb={18}><path d="M1 14.500l2-4V7q.5-6 6-6t6 6v3.500l2 4zM6.500 15q.5 2.300 2.500 2.300t2.500-2.300" /></Line>
        </Tray>
      </Taskbar>
    </Screen>
  );
}
